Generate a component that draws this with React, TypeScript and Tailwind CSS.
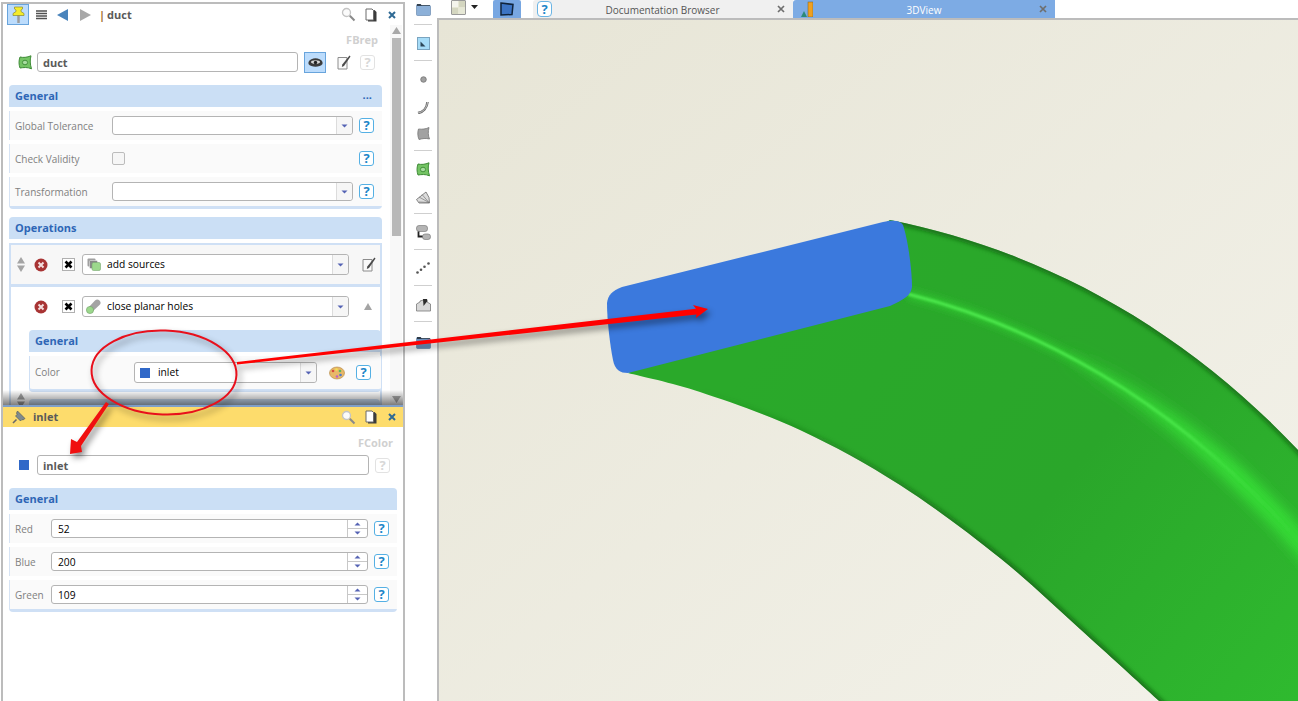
import React from 'react';

// catmull-rom through points, for the lower duct outline
const smooth = (pts: number[][], move = true) => {
  let d = move ? `M${pts[0][0]},${pts[0][1]}` : `L${pts[0][0]},${pts[0][1]}`;
  for (let i = 0; i < pts.length - 1; i++) {
    const p0 = pts[i - 1] || pts[i];
    const p1 = pts[i];
    const p2 = pts[i + 1];
    const p3 = pts[i + 2] || p2;
    const c1 = [p1[0] + (p2[0] - p0[0]) / 6, p1[1] + (p2[1] - p0[1]) / 6];
    const c2 = [p2[0] - (p3[0] - p1[0]) / 6, p2[1] - (p3[1] - p1[1]) / 6];
    d += ` C${c1[0]},${c1[1]} ${c2[0]},${c2[1]} ${p2[0]},${p2[1]}`;
  }
  return d;
};

const outerPath = 'M890,220 C1040,250 1180,325 1298,450 L1350,510';
const ridgePath = 'M908,294 C1030,325 1170,395 1298,540 L1330,578';
const lower = [[628, 373], [700, 392], [800, 430], [900, 485], [1000, 558], [1080, 629], [1158, 700], [1190, 730]];
const ductPath = outerPath + ' L1350,760 ' + smooth([...lower].reverse(), false) + ' Z';

const Help: React.FC<{ faded?: boolean }> = ({ faded }) => (
  <div className={`w-[15px] h-[15px] shrink-0 rounded-[3px] border flex items-center justify-center bg-white text-[13px] font-bold leading-none ${faded ? 'border-[#e2e2e2] text-[#d8d8d8]' : 'border-[#55b0e4] text-[#1c86c8]'}`}>?</div>
);

const DownTri = () => (
  <svg width="7" height="4" viewBox="0 0 7 4"><path d="M0.5 0.5h6L3.5 3.5z" fill="#5563b4" /></svg>
);

const Combo: React.FC<{ className: string; icon?: React.ReactNode; label?: string }> = ({ className, icon, label }) => (
  <div className={`flex items-stretch shrink-0 bg-white border border-[#b4b4b4] rounded-[3px] ${className}`}>
    <div className="flex-1 flex items-center min-w-0">
      {icon}
      {label && <span className="text-black text-[10.25px]">{label}</span>}
    </div>
    <div className="w-[16px] border-l border-[#dcdcdc] bg-[#f6f6f6] rounded-r-[3px] flex items-center justify-center">
      <DownTri />
    </div>
  </div>
);

const Spin: React.FC<{ value: string }> = ({ value }) => (
  <div className="w-[317px] h-[19px] flex items-stretch shrink-0 bg-white border border-[#b4b4b4] rounded-[3px]">
    <div className="flex-1 pl-[6px] text-[10.25px] leading-[18px] text-black">{value}</div>
    <div className="w-[20px] border-l border-[#c8c8c8] flex flex-col items-center justify-center gap-[2px]">
      <svg width="7" height="4" viewBox="0 0 7 4"><path d="M0.5 3.5h6L3.5 0.5z" fill="#5563b4" /></svg>
      <div className="w-full h-px bg-[#c8c8c8]" />
      <DownTri />
    </div>
  </div>
);

const SectionHead: React.FC<{ label: string; className: string; dots?: boolean }> = ({ label, className, dots }) => (
  <div className={`h-[22px] shrink-0 bg-[#cbdff5] rounded-t-[4px] flex items-center justify-between pl-[6px] pr-[10px] ${className}`}>
    <span className="text-[11px] font-bold text-[#2e66b6]">{label}</span>
    {dots && <span className="text-[11px] font-bold text-[#2e66b6] leading-none pb-[4px]">...</span>}
  </div>
);

const Row: React.FC<{ label: string; labelClass: string; children: React.ReactNode }> = ({ label, labelClass, children }) => (
  <div className="h-[29px] flex items-center bg-[#fafafa] border-l border-[#d6e3f4] pl-[5px]">
    <span className={`text-[10px] pt-px text-[#808080] shrink-0 ${labelClass}`}>{label}</span>
    {children}
  </div>
);

const Search = () => (
  <svg width="15" height="15" viewBox="0 0 15 15">
    <circle cx="5.5" cy="5.5" r="4" fill="#fbfbfb" stroke="#c4c4c4" strokeWidth="1.3" />
    <path d="M8.8 8.8L13.5 13.5" stroke="#8a8a8a" strokeWidth="2" />
  </svg>
);

const CopyDoc = () => (
  <svg width="12" height="14" viewBox="0 0 12 14">
    <path d="M3 2h6.500l2 2v9.500H3z" fill="#3c3c3c" />
    <path d="M1 1h6l1.500 1.500v9.500H1z" fill="#fff" stroke="#6a6a6a" strokeWidth="1" />
  </svg>
);

const CloseX = () => (
  <svg width="8" height="8" viewBox="0 0 8 8"><path d="M1 1l6 6M7 1L1 7" stroke="#2f6a94" strokeWidth="2" /></svg>
);

const PanelActions = () => (
  <div className="ml-auto flex items-center">
    <Search />
    <div className="ml-[9px]"><CopyDoc /></div>
    <div className="ml-[11px] mr-[7px]"><CloseX /></div>
  </div>
);

const ErrIcon = () => (
  <svg className="shrink-0" width="14" height="14" viewBox="0 0 14 14">
    <circle cx="7" cy="7" r="6.5" fill="#a83434" />
    <path d="M4.5 4.5l5 5M9.5 4.5l-5 5" stroke="#f4dede" strokeWidth="2" />
  </svg>
);

const CheckX = () => (
  <div className="w-[13px] h-[13px] shrink-0 bg-white border border-[#b0b0b0] flex items-center justify-center">
    <svg width="9" height="9" viewBox="0 0 9 9"><path d="M1.5 1.5l6 6M7.5 1.5l-6 6" stroke="#000" strokeWidth="2.6" /></svg>
  </div>
);

const EditIcon = () => (
  <svg className="shrink-0" width="14" height="15" viewBox="0 0 14 15">
    <path d="M1 2.5h9v11.5H1z" fill="#fafafa" stroke="#8c8c8c" strokeWidth="1" />
    <path d="M12.5 0.5l1 1L7 11l-2.2 1 .5-2.4z" fill="#4a4a4a" />
  </svg>
);

const UpDown = () => (
  <svg className="shrink-0" width="8" height="15" viewBox="0 0 8 15">
    <path d="M4 0l4 6.5H0z" fill="#a4a4a4" />
    <path d="M4 15l4-6.5H0z" fill="#a4a4a4" />
  </svg>
);

const FaceIcon = () => (
  <svg width="14" height="15" viewBox="0 0 14 15">
    <path d="M2 2C5 2.800 9 2.500 13 .8c-1.200 4.200-1 8 .5 13-4-1.800-8-1.300-11.500-.8C.8 9.500.6 6 2 2z" fill="#74c464" stroke="#3c8a34" strokeWidth="1" />
    <ellipse cx="7" cy="7.500" rx="2.600" ry="2.300" fill="#a8dca0" stroke="#3c8a34" strokeWidth="0.900" />
  </svg>
);

const Folder = ({ fill = '#8cb0d8', top = '#33414f' }) => (
  <svg width="15" height="13" viewBox="0 0 15 13">
    <path d="M0.5 2.5a1 1 0 0 1 1-1h3l1 1h8a1 1 0 0 1 1 1v8a1 1 0 0 1-1 1h-12a1 1 0 0 1-1-1z" fill={fill} stroke="#6a8bb0" strokeWidth="0.7" />
    <path d="M1 1h3.5l1.2 1.2H14v.8H1z" fill={top} />
  </svg>
);

const Tool: React.FC<{ className: string; children: React.ReactNode }> = ({ className, children }) => (
  <div className={`h-[16px] w-full flex items-center justify-center shrink-0 ${className}`}>{children}</div>
);
const ToolSep: React.FC<{ className: string }> = ({ className }) => (
  <div className={`h-px w-[18px] bg-[#cfcfcf] shrink-0 ${className}`} />
);

const Toolbar = () => (
  <div className="w-[32px] shrink-0 flex flex-col items-center pt-px pl-[4px] bg-white">
    <Tool className=""><Folder /></Tool>
    <ToolSep className="mt-[7px]" />
    <Tool className="mt-[10px]">
      <svg width="13" height="13" viewBox="0 0 13 13"><rect x="0.5" y="0.5" width="12" height="12" fill="#a6dcf8" stroke="#7aa4c0" /><path d="M3.5 4.5v5h5z" fill="#2c4658" /></svg>
    </Tool>
    <ToolSep className="mt-[9px]" />
    <Tool className="mt-[10px]">
      <svg width="7" height="7" viewBox="0 0 7 7"><circle cx="3.5" cy="3.5" r="2.8" fill="#a0a0a0" stroke="#6a6a6a" strokeWidth="0.7" /></svg>
    </Tool>
    <Tool className="mt-[12px]">
      <svg width="12" height="13" viewBox="0 0 12 13"><path d="M1 12C6 11 10 7 10.500 1" fill="none" stroke="#6a6a6a" strokeWidth="2.600" /><path d="M1 12C6 11 10 7 10.500 1" fill="none" stroke="#c4c4c4" strokeWidth="1" /></svg>
    </Tool>
    <Tool className="mt-[10px]">
      <svg width="13" height="13" viewBox="0 0 13 13"><path d="M1.500 2C5 2.500 9 2 12 0.500c-1 4-1 8 .5 11.500-4-1-7-.5-10.500.500C.5 9 .5 5 1.500 2z" fill="#a2a2a2" stroke="#767676" strokeWidth="0.8" /></svg>
    </Tool>
    <ToolSep className="mt-[9px]" />
    <Tool className="mt-[10px]"><FaceIcon /></Tool>
    <Tool className="mt-[12px]">
      <svg width="14" height="13" viewBox="0 0 14 13"><path d="M0.500 8.500L10 1l3 5.500.5 5.500H3z" fill="#dcdcdc" stroke="#6a6a6a" strokeWidth="0.800" /><path d="M13 11.500L3 6M13 11.500L6 3.500M13 11.500L3 11" stroke="#6a6a6a" strokeWidth="0.600" /></svg>
    </Tool>
    <ToolSep className="mt-[8px]" />
    <Tool className="mt-[10px]">
      <svg width="15" height="15" viewBox="0 0 15 15"><rect x="0.500" y="0.500" width="11" height="6" rx="2.500" fill="#b4b4b4" stroke="#808080" strokeWidth="0.700" /><rect x="6.500" y="9" width="8" height="5.500" rx="2.500" fill="#b4b4b4" stroke="#808080" strokeWidth="0.700" /><path d="M2.500 6.500v5h4" fill="none" stroke="#222" strokeWidth="1.800" /></svg>
    </Tool>
    <ToolSep className="mt-[9px]" />
    <Tool className="mt-[10px]">
      <svg width="14" height="12" viewBox="0 0 14 12"><circle cx="1.500" cy="10.500" r="1.300" fill="#555" /><circle cx="5" cy="7.700" r="1.300" fill="#555" /><circle cx="8.500" cy="4.700" r="1.300" fill="#555" /><circle cx="12.500" cy="1.500" r="1.300" fill="#555" /></svg>
    </Tool>
    <ToolSep className="mt-[9px]" />
    <Tool className="mt-[11px]">
      <svg width="15" height="14" viewBox="0 0 15 14"><path d="M0.500 6L4 4v-1a5 3 0 0 1 7 0v1l3.500 2v7H.5z" fill="#d8d8d8" stroke="#7a7a7a" strokeWidth="0.800" /><path d="M7.500 8L7 1h4l.5 2z" fill="#2c2c2c" /></svg>
    </Tool>
    <ToolSep className="mt-[8px]" />
    <Tool className="mt-[12px]"><Folder fill="#6f93c0" top="#2d3a48" /></Tool>
  </div>
);

const TabX = () => (
  <svg width="8" height="8" viewBox="0 0 8 8"><path d="M1 1l6 6M7 1L1 7" stroke="#6e6e6e" strokeWidth="1.700" /></svg>
);

const TabsBar = () => (
  <div className="h-[18px] shrink-0 flex bg-white">
    <div className="ml-[14px] mt-0 w-[15px] h-[15px] border border-[#9a9a9a] bg-[#e6e6d4] grid grid-cols-2 grid-rows-2 gap-px rounded-[1px]">
      <div className="bg-[#f4f4ec]" /><div className="bg-[#d4d6c0]" /><div className="bg-[#d4d6c0]" /><div className="bg-[#e6e8d6]" />
    </div>
    <div className="ml-[5px] mt-[5px]">
      <svg width="7" height="4" viewBox="0 0 7 4"><path d="M0 0h7L3.500 4z" fill="#222" /></svg>
    </div>
    <div className="ml-[15px] w-[28px] bg-[#78a7e2] rounded-t-[2px] flex items-center justify-center">
      <svg width="14" height="14" viewBox="0 0 14 14"><path d="M1 1l12 1.500-1 10L1 13z" fill="#3c74c4" stroke="#10243c" strokeWidth="1.500" /></svg>
    </div>
    <div className="ml-[12px] w-[260px] bg-[#f0f0f0] flex items-center pl-[4px] pr-[8px] rounded-tl-[3px]">
      <div className="w-[15px] h-[16px] rounded-[4px] border border-[#6ab4e4] bg-white text-[#1c86c8] text-[13px] font-bold leading-none flex items-center justify-center">?</div>
      <span className="flex-1 text-center text-[10px] pt-[3px] text-[#555] pr-[4px]">Documentation Browser</span>
      <TabX />
    </div>
    <div className="w-[262px] bg-[#7dabe4] flex items-center pl-[8px] pr-[8px] rounded-tl-[3px]">
      <svg width="12" height="16" viewBox="0 0 12 16"><path d="M3 10l3 6H0z" fill="#2c8a78" /><rect x="7" y="1" width="5" height="15" fill="#f0a020" stroke="#7a6020" strokeWidth="0.500" /></svg>
      <span className="flex-1 text-center text-[10px] pt-[3px] text-white pr-[4px]">3DView</span>
      <TabX />
    </div>
  </div>
);

const Viewport = () => (
  <div className="flex-1 min-h-0 border-l-2 border-t-2 border-[#bcbcbc] bg-gradient-to-br from-[#e7e5d6] to-[#f3f2ea]">
    <svg className="block w-full h-full" viewBox="439 20 859 681" preserveAspectRatio="none">
      <defs>
        <clipPath id="duct"><path d={ductPath} /></clipPath>
        <linearGradient id="body" gradientUnits="userSpaceOnUse" x1="800" y1="300" x2="1298" y2="700">
          <stop offset="0" stopColor="#2aa92a" />
          <stop offset="0.5" stopColor="#2aa62a" />
          <stop offset="1" stopColor="#2fba2f" />
        </linearGradient>
        <linearGradient id="edgeFade" gradientUnits="userSpaceOnUse" x1="700" y1="0" x2="1000" y2="0">
          <stop offset="0" stopColor="#145a14" stopOpacity="0" />
          <stop offset="1" stopColor="#145a14" stopOpacity="0.75" />
        </linearGradient>
        <linearGradient id="glow" gradientUnits="userSpaceOnUse" x1="1060" y1="0" x2="1240" y2="0">
          <stop offset="0" stopColor="#36d836" stopOpacity="0" />
          <stop offset="1" stopColor="#36d836" stopOpacity="1" />
        </linearGradient>
        <linearGradient id="thin" gradientUnits="userSpaceOnUse" x1="908" y1="0" x2="1298" y2="0">
          <stop offset="0" stopColor="#4fea4f" />
          <stop offset="0.7" stopColor="#48e648" />
          <stop offset="1" stopColor="#38dc38" stopOpacity="0" />
        </linearGradient>
        <filter id="b3" x="-10%" y="-10%" width="120%" height="120%"><feGaussianBlur stdDeviation="2" /></filter>
        <filter id="b1" x="-10%" y="-10%" width="120%" height="120%"><feGaussianBlur stdDeviation="0.800" /></filter>
        <filter id="b8" x="-10%" y="-10%" width="120%" height="120%"><feGaussianBlur stdDeviation="6" /></filter>
        <filter id="b4" x="-10%" y="-10%" width="120%" height="120%"><feGaussianBlur stdDeviation="3.500" /></filter>
      </defs>
      <path d={ductPath} fill="url(#body)" />
      <g clipPath="url(#duct)">
        <path d={ridgePath} fill="none" stroke="#2fc42f" strokeWidth="9" filter="url(#b4)" />
        <path d={ridgePath} fill="none" stroke="url(#glow)" strokeWidth="22" filter="url(#b8)" />
        <path d={ridgePath} fill="none" stroke="url(#thin)" strokeWidth="3" filter="url(#b1)" />
        <path d={outerPath} fill="none" stroke="#145a14" strokeOpacity="0.7" strokeWidth="6" filter="url(#b3)" />
        <path d={smooth(lower)} fill="none" stroke="url(#edgeFade)" strokeWidth="6" filter="url(#b3)" />
      </g>
      <path
        d="M607,303 C608,295 612,291 622,287 L883,222 C893,220 900,220 903,225 C908,240 912,270 912,287 C911,295 905,299 890,306 L628,373 C620,373 615,370 613,360 C610,345 607,320 607,303 Z"
        fill="#3b79dd"
      />
    </svg>
  </div>
);

const TopPanel = () => (
  <div className="relative h-[401px] shrink-0 flex flex-col overflow-hidden">
    <div className="h-[21px] shrink-0 flex items-center pl-[4px]">
      <div className="w-[22px] h-[21px] bg-[#bcdcfc] border border-[#68a4dc] flex items-center justify-center">
        <svg width="13" height="17" viewBox="0 0 13 17">
          <path d="M6.500 9v8" stroke="#9c9c9c" strokeWidth="2.500" />
          <path d="M2.500 1h8v2l-1.500 1v1.500L12 7.500v2H1v-2l3-2V4L2.500 3z" fill="#f4ec2c" stroke="#8a8a30" strokeWidth="0.700" />
        </svg>
      </div>
      <svg className="ml-[7px]" width="11" height="10" viewBox="0 0 11 10"><path d="M0 1h11M0 3.500h11M0 6h11M0 8.500h11" stroke="#505050" strokeWidth="1.500" /></svg>
      <svg className="ml-[10px]" width="11" height="12" viewBox="0 0 11 12"><path d="M11 0v12L0 6z" fill="#4a84bc" /></svg>
      <svg className="ml-[12px]" width="11" height="12" viewBox="0 0 11 12"><path d="M0 0v12l11-6z" fill="#a8a8a8" /></svg>
      <span className="ml-[8px] pt-px text-[11px] font-bold text-[#5a5a5a]"><span className="text-[#a0702c] mr-[2px]">|</span>duct</span>
      <PanelActions />
    </div>
    <div className="flex-1 min-h-0 flex">
      <div className="w-[387px] shrink-0 overflow-hidden">
        <div className="mt-[8px] h-[14px] pr-[12px] text-right text-[11px] leading-[14px] font-bold text-[#d0d0d0]">FBrep</div>
        <div className="mt-[5px] h-[20px] flex items-center pl-[15px]">
          <FaceIcon />
          <div className="ml-[5px] w-[261px] h-[20px] border border-[#b4b4b4] rounded-[3px] pl-[5px] text-[11px] leading-[20px] font-bold text-[#5a5a5a]">duct</div>
          <div className="ml-[6px] w-[22px] h-[21px] bg-[#bcdcfc] border border-[#68a4dc] flex items-center justify-center">
            <svg width="15" height="10" viewBox="0 0 15 10"><path d="M0.500 5C3 0 12 0 14.500 5v2c-2.500 3.500-11.500 3.500-14 0z" fill="#3c3c3c" /><ellipse cx="7.500" cy="5" rx="4.500" ry="1.800" fill="#d8d8d8" /><circle cx="7.500" cy="5.500" r="1.700" fill="#222" /></svg>
          </div>
          <div className="ml-[11px]"><EditIcon /></div>
          <div className="ml-[9px]"><Help faded /></div>
        </div>

        <SectionHead label="General" className="mt-[13px] ml-[6px] w-[373px]" dots />
        <div className="mt-[4px] ml-[6px] w-[373px] flex flex-col gap-[4px] border-b-[3px] border-[#cfe0f5] rounded-b-[4px]">
          <Row label="Global Tolerance" labelClass="w-[97px]">
            <Combo className="w-[241px] h-[19px]" />
            <div className="ml-[6px]"><Help /></div>
          </Row>
          <Row label="Check Validity" labelClass="w-[97px]">
            <div className="w-[13px] h-[13px] border border-[#bcbcbc] rounded-[2px] bg-[#f6f6f6]" />
            <div className="ml-[234px]"><Help /></div>
          </Row>
          <Row label="Transformation" labelClass="w-[97px]">
            <Combo className="w-[241px] h-[19px]" />
            <div className="ml-[6px]"><Help /></div>
          </Row>
        </div>

        <SectionHead label="Operations" className="mt-[8px] ml-[6px] w-[373px]" />
        <div className="mt-[4px] ml-[6px] w-[373px] border-x-2 border-t-2 border-[#cfe0f5]">
          <div className="h-[39px] bg-[#f7f7f7] border-b-[3px] border-[#cfe0f5] box-content flex items-center pl-[6px]">
            <UpDown />
            <div className="ml-[9px]"><ErrIcon /></div>
            <div className="ml-[14px]"><CheckX /></div>
            <Combo
              className="ml-[7px] w-[267px] h-[21px]"
              icon={
                <svg className="ml-[4px] mr-[6px]" width="14" height="13" viewBox="0 0 14 13"><rect x="0.500" y="0.500" width="8" height="8" rx="1" fill="#a0a0a0" /><rect x="2.500" y="2.500" width="8" height="8" rx="1" fill="#888" stroke="#f6f6f6" strokeWidth="0.500" /><rect x="5" y="4.500" width="8.500" height="8" rx="1.500" fill="#9cd88c" stroke="#78a870" strokeWidth="0.600" /></svg>
              }
              label="add sources"
            />
            <div className="ml-[13px]"><EditIcon /></div>
          </div>
          <div className="pt-[9px]">
            <div className="h-[21px] flex items-center pl-[23px]">
              <ErrIcon />
              <div className="ml-[14px]"><CheckX /></div>
              <Combo
                className="ml-[7px] w-[267px] h-[21px]"
                icon={
                  <svg className="ml-[3px] mr-[6px]" width="15" height="15" viewBox="0 0 15 15"><path d="M2 9L9 1.500a3 3 0 0 1 4.500 4.500L6 13z" fill="#a4a4a4" /><circle cx="4" cy="11" r="3.600" fill="#9cd88c" stroke="#70a068" strokeWidth="0.600" /></svg>
                }
                label="close planar holes"
              />
              <svg className="ml-[15px]" width="8" height="7" viewBox="0 0 8 7"><path d="M4 0l4 7H0z" fill="#a4a4a4" /></svg>
            </div>
            <SectionHead label="General" className="mt-[13px] ml-[18px] w-[352px]" />
            <div className="mt-[4px] ml-[18px] w-[352px] h-[36px] border-l border-b-[3px] border-[#cfe0f5] rounded-b-[4px] flex items-center pl-[5px] bg-[#fafafa]">
              <span className="w-[99px] text-[10px] text-[#808080] shrink-0">Color</span>
              <Combo
                className="w-[183px] h-[21px]"
                icon={<div className="ml-[5px] mr-[8px] w-[10px] h-[10px] bg-[#3068c8]" />}
                label="inlet"
              />
              <svg className="ml-[12px] shrink-0" width="16" height="14" viewBox="0 0 16 14"><ellipse cx="8" cy="7" rx="7.500" ry="6" fill="#e8b868" stroke="#b08038" strokeWidth="0.600" /><circle cx="4" cy="5" r="1.300" fill="#d84a3c" /><circle cx="7.500" cy="3.500" r="1.300" fill="#f4e050" /><circle cx="11" cy="5" r="1.300" fill="#5cb85c" /><circle cx="11.500" cy="9" r="1.300" fill="#4a7ad0" /><circle cx="8" cy="10.500" r="1.300" fill="#c060c0" /></svg>
              <div className="ml-[11px]"><Help /></div>
            </div>
            <div className="mt-px ml-[6px] h-[13px] flex">
              <UpDown />
              <div className="ml-[4px] mt-[6px] w-[352px] h-[8px] bg-[#cbdff5] rounded-t-[4px]" />
            </div>
          </div>
        </div>
      </div>
      <div className="w-[12px] shrink-0 flex flex-col items-center pt-[2px] pb-[2px] bg-[#f8f8f8]">
        <svg width="9" height="7" viewBox="0 0 9 7"><path d="M4.500 0L9 7H0z" fill="#a8a8a8" /></svg>
        <div className="mt-[4px] w-[9px] h-[198px] bg-[#b8b8b8]" />
        <svg className="mt-auto" width="9" height="7" viewBox="0 0 9 7"><path d="M4.500 7L9 0H0z" fill="#a8a8a8" /></svg>
      </div>
    </div>
    {/* shadow thrown by the inlet panel */}
    <div className="absolute left-0 right-0 bottom-0 h-[15px] bg-gradient-to-b from-transparent to-[#00000080]" />
  </div>
);

const BottomPanel = () => (
  <div className="flex-1 min-h-0 border-t-2 border-[#7f9fc8] flex flex-col">
    <div className="h-[20px] shrink-0 bg-[#fddc6c] flex items-center pl-[9px]">
      <svg width="14" height="14" viewBox="0 0 14 14"><path d="M5.500 1L13 8.500l-2 1.500-1-.5-1.500 1.500-5-5L5 4.500 4.500 3z" fill="#7f8a8e" stroke="#4a5256" strokeWidth="0.600" /><path d="M4.500 9.500L1 13" stroke="#6a6a6a" strokeWidth="1.600" /></svg>
      <span className="ml-[7px] pt-px text-[11px] font-bold text-[#5a5a5a]">inlet</span>
      <PanelActions />
    </div>
    <div className="mt-[9px] h-[14px] pr-[10px] text-right text-[11px] leading-[14px] font-bold text-[#d0d0d0]">FColor</div>
    <div className="mt-[5px] h-[20px] flex items-center pl-[16px]">
      <div className="w-[10px] h-[10px] bg-[#3068c8]" />
      <div className="ml-[8px] w-[332px] h-[20px] border border-[#b4b4b4] rounded-[3px] pl-[5px] text-[11px] leading-[20px] font-bold text-[#5a5a5a]">inlet</div>
      <div className="ml-[6px]"><Help faded /></div>
    </div>
    <SectionHead label="General" className="mt-[13px] ml-[6px] w-[388px]" />
    <div className="mt-[4px] ml-[6px] w-[388px] flex flex-col gap-[4px] border-b-[3px] border-[#cfe0f5] rounded-b-[4px]">
      <Row label="Red" labelClass="w-[36px]"><Spin value="52" /><div className="ml-[6px]"><Help /></div></Row>
      <Row label="Blue" labelClass="w-[36px]"><Spin value="200" /><div className="ml-[6px]"><Help /></div></Row>
      <Row label="Green" labelClass="w-[36px]"><Spin value="109" /><div className="ml-[6px]"><Help /></div></Row>
    </div>
  </div>
);

const Annotations = () => (
  <svg className="absolute left-0 top-0 w-[1298px] h-[701px] pointer-events-none drop-shadow-[3px_4px_3px_rgba(0,0,0,0.45)]" viewBox="0 0 1298 701">
    <ellipse cx="164" cy="372.500" rx="72.500" ry="42" fill="none" stroke="#e8101c" strokeWidth="2" transform="rotate(2 164 372.500)" />
    <path d="M237,362 L696,308.800 L693,305 L708,309 L696,318 L696.500,314.500 L237,364.500 Z" fill="#ff0000" />
    <path d="M106,402 L109,404 L81,446 L82,452 L70,454 L71,439 L77,442 Z" fill="#f01010" />
  </svg>
);

export default function App() {
  return (
    <div className="relative w-[1298px] h-[701px] overflow-hidden bg-white flex font-['Open_Sans','Liberation_Sans',sans-serif]">
      <div className="w-[404px] h-[699px] mt-[2px] ml-[1px] shrink-0 flex flex-col border-x-2 border-t-2 border-[#bcbcbc] bg-white">
        <TopPanel />
        <BottomPanel />
      </div>
      <Toolbar />
      <div className="flex-1 min-w-0 flex flex-col">
        <TabsBar />
        <Viewport />
      </div>
      <Annotations />
    </div>
  );
}
